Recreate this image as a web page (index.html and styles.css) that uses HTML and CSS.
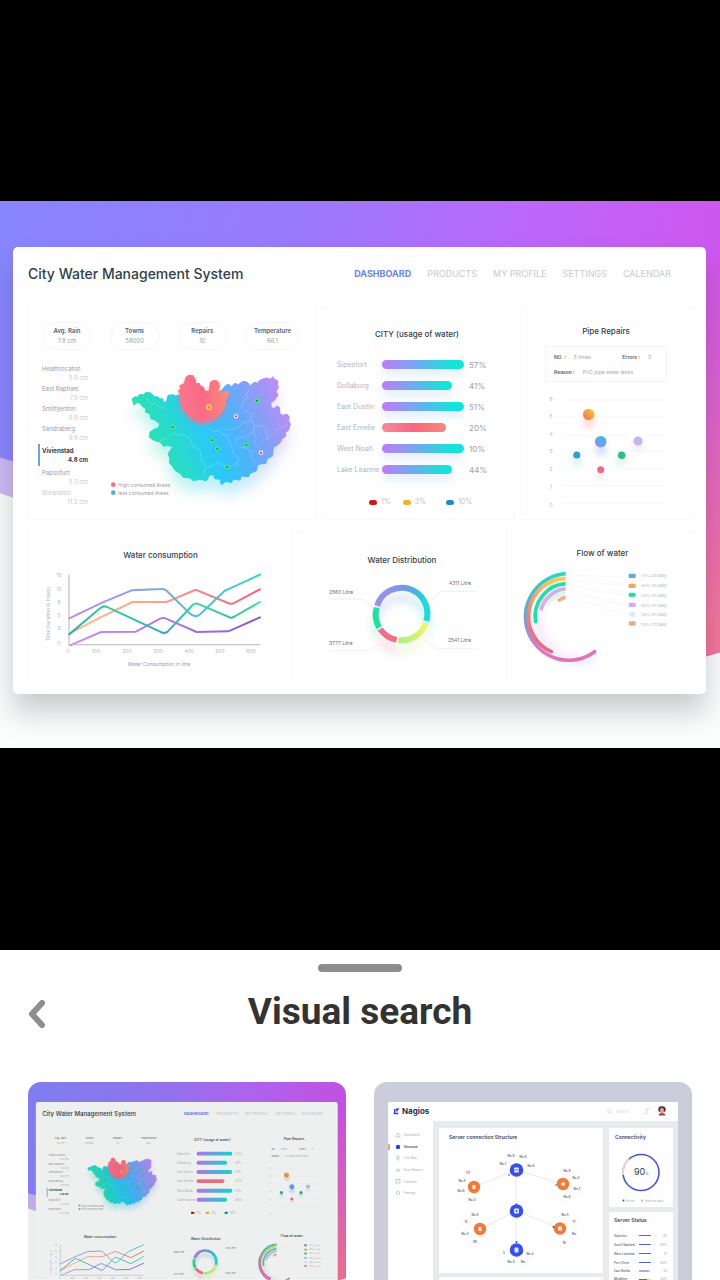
FILE: index.html
```html
<!DOCTYPE html>
<html lang="en">
<head>
<meta charset="utf-8">
<meta name="viewport" content="width=device-width, initial-scale=1">
<title>Visual search</title>
<link rel="stylesheet" href="styles.css">
</head>
<body>
<main class="viewer">
  <section class="shot">
    <svg class="shot-bg" viewBox="0 201 720 547" preserveAspectRatio="none" aria-hidden="true">
      <defs>
        <linearGradient id="sky" x1="0" y1="0" x2="1" y2="0.12"><stop offset="0" stop-color="#8886ff"/><stop offset=".4" stop-color="#987bfc"/><stop offset=".7" stop-color="#b969fb"/><stop offset="1" stop-color="#d056ee"/></linearGradient>
        <linearGradient id="dusk" x1="0" y1="0" x2="0" y2="1"><stop offset=".1" stop-color="#f274a6" stop-opacity="0"/><stop offset=".85" stop-color="#f5749c"/></linearGradient>
        <linearGradient id="duskMask" x1="0" y1="0" x2="1" y2="0"><stop offset=".3" stop-color="#000"/><stop offset=".9" stop-color="#fff"/></linearGradient>
        <mask id="rightSide"><rect x="-10" y="201" width="740" height="547" fill="url(#duskMask)"/></mask>
      </defs>
      <g id="backdrop">
        <rect x="-10" y="201" width="740" height="547" fill="#fcfdfd"/>
        <path d="M-10 440L200 520L200 560L-10 490Z" fill="#cdb8f6"/>
        <path d="M-10 201H730V650Q690 658 660 680Q600 702 560 688Q300 640 150 540Q60 470-10 455Z" fill="url(#sky)"/>
        <path d="M-10 201H730V650Q690 658 660 680Q600 702 560 688Q300 640 150 540Q60 470-10 455Z" fill="url(#dusk)" mask="url(#rightSide)"/>
      </g>
    </svg>

    <article class="board">
      <header class="board-head">
        <h1 class="board-title">City Water Management System</h1>
        <nav class="board-nav">
          <a class="nav-link nav-link-on" href="#dashboard">DASHBOARD</a>
          <a class="nav-link" href="#products">PRODUCTS</a>
          <a class="nav-link" href="#profile">MY PROFILE</a>
          <a class="nav-link" href="#settings">SETTINGS</a>
          <a class="nav-link" href="#calendar">CALENDAR</a>
        </nav>
      </header>

      <div class="row row-top">
        <section class="panel">
          <div class="stats">
            <div class="stat"><b class="stat-name">Avg. Rain</b><span class="stat-value">7.8 cm</span></div>
            <div class="stat"><b class="stat-name">Towns</b><span class="stat-value">58000</span></div>
            <div class="stat"><b class="stat-name">Repairs</b><span class="stat-value">10</span></div>
            <div class="stat"><b class="stat-name">Temperature</b><span class="stat-value">66.1</span></div>
          </div>
          <div class="region">
            <ul class="towns">
              <li class="town"><span>Heathrocaton</span><span class="town-rain">5.8 cm</span></li>
              <li class="town"><span>East Raphael</span><span class="town-rain">7.8 cm</span></li>
              <li class="town"><span>Smithjenton</span><span class="town-rain">6.8 cm</span></li>
              <li class="town"><span>Sandraberg</span><span class="town-rain">9.8 cm</span></li>
              <li class="town town-on"><span>Vivienstad</span><span class="town-rain">4.8 cm</span></li>
              <li class="town"><span>Papsofurt</span><span class="town-rain">5.3 cm</span></li>
              <li class="town town-faint"><span>Breanaton</span><span class="town-rain">11.2 cm</span></li>
            </ul>
            <svg class="map" viewBox="104 355 212 160" role="img" aria-label="Map of water use">
              <defs>
                <linearGradient id="land" gradientUnits="userSpaceOnUse" x1="400" y1="320" x2="800" y2="150"><stop offset="0" stop-color="#2ee0b0"/><stop offset=".2" stop-color="#27d9d0"/><stop offset=".4" stop-color="#2bc8fb"/><stop offset=".58" stop-color="#4bb4fb"/><stop offset=".8" stop-color="#8b9df6"/><stop offset="1" stop-color="#c18af6"/></linearGradient>
                <linearGradient id="hot" x1="0" y1="0" x2="1" y2="0"><stop offset="0" stop-color="#f9788c"/><stop offset=".5" stop-color="#fb6a86"/><stop offset="1" stop-color="#f98e78"/></linearGradient>
                <filter id="glow" x="-30%" y="-30%" width="160%" height="170%"><feGaussianBlur stdDeviation="20"/></filter>
                <filter id="soft" x="-20%" y="-20%" width="140%" height="150%"><feGaussianBlur stdDeviation="7"/></filter>
                <path id="outline" d="M336 147L345 140L352 142L358 134L370 134L376 128L390 128L398 134L402 140L415 141L420 147L428 146L430 157L440 155L444 136L460 134L466 138L480 134L540 150L605 122L612 112L620 104L628 104L634 110L645 100L655 104L664 97L672 94L684 98L690 108L698 100L708 96L712 102L718 92L730 86L742 84L752 88L758 80L762 86L774 94L772 106L776 112L768 124L774 134L770 142L764 150L752 160L754 172L762 176L770 168L778 172L780 192L790 196L800 192L808 200L806 212L811 222L806 240L796 248L798 258L786 266L782 276L772 286L760 292L758 318L742 326L738 340L722 342L712 346L710 362L690 370L686 380L664 378L660 390L640 388L634 398L618 394L604 404L600 388L584 386L580 374L568 376L560 392L540 388L520 392L510 384L490 382L480 370L466 362L458 350L448 338L450 326L444 312L452 300L458 290L440 286L432 290L420 276L404 272L388 262L390 246L402 238L414 234L420 222L404 210L392 206L390 192L376 186L378 176L368 170L360 160L350 158L342 166Z"/>
                <path id="hotland" d="M480 134L474 122L480 118L478 106L492 100L496 82L506 74L520 76L528 90L528 100L538 98L542 106L552 112L556 122L566 122L570 96L580 90L590 90L598 98L600 110L596 120L606 128L612 122L628 124L626 136L618 148L616 166L604 188L590 202L570 210L545 216L520 208L500 190L484 170L480 155Z"/>
              </defs>
              <g id="map-art">
                <g transform="translate(20 350) scale(.33333)">
                  <use href="#outline" fill="url(#land)" opacity=".3" filter="url(#glow)" transform="translate(0 36)"/>
                  <use href="#outline" fill="url(#land)" stroke="url(#land)" stroke-width="3" stroke-linejoin="round"/>
                  <g fill="none" stroke="#fff" stroke-opacity=".3" stroke-width="2" stroke-linejoin="round">
                    <path d="M380 144L392 160L408 162L424 176L436 168"/>
                    <path d="M420 272L446 262L462 250L488 256L508 264L520 290L540 300L544 330L556 346L552 380"/>
                    <path d="M570 234L582 246L596 240L604 252L620 256L626 272L634 290L640 310L656 324L650 350"/>
                    <path d="M690 120L678 132L680 146L668 156L664 172L684 188L696 196L690 214L668 218L656 232L630 240L616 238"/>
                    <path d="M696 214L704 228L722 226L740 238L742 268L760 252L778 236L804 224"/>
                    <path d="M704 228L700 246L708 258L706 280L718 294M700 246L676 262L650 264L648 280L660 292L680 294L696 306L694 322L708 340"/>
                    <path d="M560 352L580 346L590 338L612 346L634 350L650 340"/>
                  </g>
                  <use href="#hotland" fill="#f9708a" opacity=".65" filter="url(#soft)" transform="translate(0 10)"/>
                  <use href="#hotland" fill="url(#hot)"/>
                  <g fill="#1c7a3c" stroke="#3df57e" stroke-width="4">
                    <circle cx="458" cy="232" r="5"/><circle cx="577" cy="271" r="5"/><circle cx="592" cy="296" r="5"/><circle cx="622" cy="351" r="5"/><circle cx="679" cy="285" r="5"/><circle cx="711" cy="152" r="5"/>
                  </g>
                  <g fill="#c42b7c" stroke="#ffd2ef" stroke-width="4"><circle cx="648" cy="199" r="5"/><circle cx="723" cy="308" r="5"/></g>
                  <circle cx="567" cy="172" r="7" fill="#f08a3c" stroke="#ffd34f" stroke-width="4"/>
                  <circle cx="280" cy="404" r="7" fill="#f4717d"/><circle cx="280" cy="428" r="7" fill="#58acdf"/>
                </g>
                <text class="t5 ink" x="118" y="487">High consumed Areas</text>
                <text class="t5 ink" x="118" y="495">less consumed Areas</text>
              </g>
            </svg>
          </div>
        </section>

        <section class="panel city">
          <h2 class="panel-title">CITY (usage of water)</h2>
          <ul class="usage">
            <li class="usage-row"><span>Sipesfort</span><i class="bar"></i><span class="usage-pct">57%</span></li>
            <li class="usage-row"><span>Dollaburg</span><i class="bar bar-mid"></i><span class="usage-pct">41%</span></li>
            <li class="usage-row"><span>East Dustin</span><i class="bar"></i><span class="usage-pct">51%</span></li>
            <li class="usage-row"><span>East Emelie</span><i class="bar bar-hot"></i><span class="usage-pct">20%</span></li>
            <li class="usage-row"><span>West Noah</span><i class="bar"></i><span class="usage-pct">10%</span></li>
            <li class="usage-row"><span>Lake Leanne</span><i class="bar bar-mid"></i><span class="usage-pct">44%</span></li>
          </ul>
          <div class="keys">
            <span class="key"><i class="dot dot-red"></i>1%</span>
            <span class="key"><i class="dot dot-yellow"></i>3%</span>
            <span class="key key-far"><i class="dot dot-blue"></i>10%</span>
          </div>
        </section>

        <section class="panel pipes">
          <h2 class="panel-title">Pipe Repairs</h2>
          <div class="facts">
            <div class="fact"><b>NO&nbsp; :</b><span>5 times</span><b class="fact-right">Errors :</b><span>3</span></div>
            <div class="fact"><b>Reason :</b><span>PVC pipe water leaks</span></div>
          </div>
          <svg class="plot" viewBox="545 390 122 122" role="img" aria-label="Repairs plot">
            <defs>
              <linearGradient id="b1" x1="1" y1="0" x2="0" y2="1"><stop offset="0" stop-color="#f7cf3a"/><stop offset="1" stop-color="#f4694f"/></linearGradient>
              <linearGradient id="b2" x1="1" y1="0" x2="0" y2="1"><stop offset="0" stop-color="#25c3e0"/><stop offset="1" stop-color="#a18af3"/></linearGradient>
              <filter id="ballGlow" x="-100%" y="-100%" width="300%" height="300%"><feGaussianBlur stdDeviation="3"/></filter>
            </defs>
            <g id="plot-art">
              <path d="M563 400H664M563 417H664M563 435H664M563 451H664M563 469H664M563 486H664M563 503H664" stroke="#f7f8f8" fill="none"/>
              <g class="t5 pale" text-anchor="middle"><text x="551" y="401">6</text><text x="551" y="418">5</text><text x="551" y="436">4</text><text x="551" y="453">3</text><text x="551" y="471">2</text><text x="551" y="489">1</text><text x="551" y="507">0</text></g>
              <g filter="url(#ballGlow)" opacity=".3"><circle cx="589" cy="422" r="6" fill="#f98a5c"/><circle cx="601" cy="450" r="6" fill="#6da6f3"/><circle cx="638" cy="447" r="4" fill="#c3a5f0"/><circle cx="577" cy="461" r="4" fill="#45cbd2"/><circle cx="621" cy="461" r="4" fill="#45dfb0"/><circle cx="600" cy="475" r="3" fill="#ef6b90"/></g>
              <circle cx="588.7" cy="414.5" r="5.7" fill="url(#b1)"/><circle cx="600.7" cy="441.7" r="5.8" fill="url(#b2)"/><circle cx="638" cy="441" r="4.6" fill="#c6b6ef"/><circle cx="576.8" cy="455" r="3.6" fill="#309fc8"/><circle cx="621.7" cy="455.3" r="3.8" fill="#31bf88"/><circle cx="600.7" cy="469.7" r="3.5" fill="#e96c8e"/>
            </g>
          </svg>
        </section>
      </div>

      <div class="row row-bottom">
        <section class="panel lines">
          <h2 class="panel-title">Water consumption</h2>
          <svg class="chart" viewBox="29 561 263 112" role="img" aria-label="Water consumption by time">
            <defs>
              <linearGradient id="l1" gradientUnits="userSpaceOnUse" x1="148" y1="0" x2="720" y2="0"><stop offset="0" stop-color="#c08af0"/><stop offset=".35" stop-color="#8e9fdc"/><stop offset=".7" stop-color="#55bfd6"/><stop offset="1" stop-color="#2fd3c4"/></linearGradient>
              <linearGradient id="l2" gradientUnits="userSpaceOnUse" x1="148" y1="0" x2="720" y2="0"><stop offset="0" stop-color="#f5c283"/><stop offset=".5" stop-color="#f4a18d"/><stop offset="1" stop-color="#e8627f"/></linearGradient>
              <linearGradient id="l3" gradientUnits="userSpaceOnUse" x1="148" y1="0" x2="720" y2="0"><stop offset="0" stop-color="#2fa8ac"/><stop offset=".2" stop-color="#35cf9c"/><stop offset=".5" stop-color="#37a9bd"/><stop offset=".68" stop-color="#3bd6a4"/><stop offset=".85" stop-color="#37bd93"/><stop offset="1" stop-color="#45e39d"/></linearGradient>
              <linearGradient id="l4" gradientUnits="userSpaceOnUse" x1="148" y1="0" x2="720" y2="0"><stop offset="0" stop-color="#cf93e4"/><stop offset=".5" stop-color="#b177e0"/><stop offset="1" stop-color="#8b5ad0"/></linearGradient>
            </defs>
            <g id="lines-art">
              <g transform="translate(20 525) scale(.33333)" fill="none" stroke-width="6" stroke-linejoin="round" stroke-linecap="round">
                <path d="M147 150V359H720" stroke="#c6c6ca" stroke-width="4"/>
                <path d="M150 361L243 321L348 320L415 284Q430 274 445 284L530 321L625 319L720 277" stroke="url(#l4)"/>
                <path d="M148 326L240 278L338 231H440L518 198Q527 192 536 198L624 234Q635 240 646 232L720 193" stroke="url(#l2)"/>
                <path d="M148 328L240 250Q250 240 264 247L420 320Q432 328 443 320L518 240Q527 232 538 238L624 275Q635 282 646 273L720 231" stroke="url(#l3)"/>
                <path d="M148 280L248 232L335 196L424 192Q432 191 440 197L508 264Q525 282 542 266L608 203Q614 196 624 193L720 149" stroke="url(#l1)"/>
              </g>
              <g class="t5 pale" text-anchor="middle">
                <text x="59" y="577">15</text><text x="59" y="591">10</text><text x="59" y="604">8</text><text x="59" y="617">5</text><text x="59" y="630">3</text><text x="59" y="645">0</text>
                <text x="68" y="653">0</text><text x="96" y="653">100</text><text x="127" y="653">200</text><text x="158" y="653">300</text><text x="189" y="653">400</text><text x="220" y="653">500</text><text x="251" y="653">600</text>
              </g>
              <text class="t5 ink" x="159" y="666" text-anchor="middle">Water Consumption in litre</text>
              <text class="t5 pale" text-anchor="middle" transform="translate(50 614) rotate(-90)">Time Duration in Hours</text>
            </g>
          </svg>
        </section>

        <section class="panel dist">
          <h2 class="panel-title">Water Distribution</h2>
          <svg class="chart" viewBox="298 566 208 108" role="img" aria-label="Water distribution">
            <defs>
              <linearGradient id="d1" x1="0" y1="0" x2="1" y2=".3"><stop offset="0" stop-color="#ae8bee"/><stop offset=".5" stop-color="#6f9be3"/><stop offset=".85" stop-color="#33c5d9"/><stop offset="1" stop-color="#22d8da"/></linearGradient>
              <linearGradient id="d2" x1="1" y1="0" x2="0" y2="1"><stop offset="0" stop-color="#f3f56e"/><stop offset="1" stop-color="#adf384"/></linearGradient>
              <filter id="ringGlow" x="-40%" y="-40%" width="180%" height="180%"><feGaussianBlur stdDeviation="12"/></filter>
              <g id="ring" fill="none" stroke-width="18">
                <path d="M246.500 242.500A77 77 0 0 1 393.700 288" stroke="url(#d1)"/>
                <path d="M392.500 293.500A77 77 0 0 1 310 345.500" stroke="url(#d2)"/>
                <path d="M305 344.500A77 77 0 0 1 255.500 312.500" stroke="#f0708a"/>
                <path d="M252.500 307.500A77 77 0 0 1 245 247.500" stroke="#21dfa0"/>
              </g>
            </defs>
            <g id="dist-art">
              <g transform="translate(295 525) scale(.33333)">
                <use href="#ring" filter="url(#ringGlow)" opacity=".3" transform="translate(0 30)"/>
                <use href="#ring"/>
                <path d="M105 222H200L238 248M404 232L436 199H545M105 376H225L260 352M380 342L425 370H545" fill="none" stroke="#f0f0f3" stroke-width="3"/>
              </g>
              <g class="t5 dark"><text x="329" y="594">2560 Litre</text><text x="449" y="585">4311 Litre</text><text x="329" y="645">3777 Litre</text><text x="448" y="642">2541 Litre</text></g>
            </g>
          </svg>
        </section>

        <section class="panel flow">
          <h2 class="panel-title">Flow of water</h2>
          <svg class="chart" viewBox="512 559 181 118" role="img" aria-label="Flow of water">
            <defs>
              <linearGradient id="f1" gradientUnits="userSpaceOnUse" x1="190" y1="146" x2="210" y2="405"><stop offset="0" stop-color="#2bd6c4"/><stop offset=".25" stop-color="#4fb9c4"/><stop offset=".6" stop-color="#9d8fc8"/><stop offset=".85" stop-color="#d47cc4"/><stop offset="1" stop-color="#e274b8"/></linearGradient>
              <linearGradient id="f2" gradientUnits="userSpaceOnUse" x1="197" y1="160" x2="150" y2="380"><stop offset="0" stop-color="#f6cf55"/><stop offset=".5" stop-color="#ef8a78"/><stop offset="1" stop-color="#e3678c"/></linearGradient>
              <linearGradient id="f4" gradientUnits="userSpaceOnUse" x1="197" y1="190" x2="120" y2="255"><stop offset="0" stop-color="#c5b5ee"/><stop offset="1" stop-color="#e2a9ea"/></linearGradient>
            </defs>
            <g id="flow-art">
              <g transform="translate(500 525) scale(.33333)">
                <path d="M197 154A130 130 0 1 0 285 400" fill="none" stroke="#c58be8" stroke-width="14" opacity=".3" filter="url(#ringGlow)"/>
                <path d="M197 150L370 156M197 162L370 182M197 180L370 210M197 194L370 240M197 210L370 268" stroke="#f7f8f9" stroke-width="2"/>
                <path d="M197 205A71 71 0 0 0 140 240" fill="none" stroke="#dff3f0" stroke-width="12"/>
                <g fill="none" stroke-width="11">
                  <path d="M197 146A130 130 0 1 0 284 380" stroke="url(#f1)"/>
                  <path d="M197 160A115 115 0 0 0 154 380" stroke="url(#f2)"/>
                  <path d="M197 176A98 98 0 0 0 107 290" stroke="#21dfa6"/>
                  <path d="M197 191A84 84 0 0 0 123 256" stroke="url(#f4)"/>
                  <path d="M197 217Q185 218 174 228" stroke="#efb283"/>
                </g>
                <circle cx="284" cy="380" r="5.500" fill="#e274b8"/><circle cx="154" cy="380" r="5.500" fill="#e3678c"/><circle cx="107" cy="290" r="5.500" fill="#21dfa6"/>
                <rect x="386" y="146" width="21" height="13" rx="3" fill="#66a7dd"/><rect x="386" y="176" width="21" height="13" rx="3" fill="#f2a560"/><rect x="386" y="203" width="21" height="13" rx="5" fill="#22dda9"/><rect x="386" y="233" width="21" height="13" rx="3" fill="#ccb0eb"/><rect x="388" y="260" width="18" height="15" rx="3" fill="#d7eff2"/><rect x="386" y="289" width="21" height="13" rx="4" fill="#eda987"/>
              </g>
              <g class="t4 pale"><text x="641" y="577">75% cm daily</text><text x="641" y="587">65% cm daily</text><text x="641" y="597">50% cm daily</text><text x="641" y="607">45% cm daily</text><text x="641" y="616">30% cm daily</text><text x="641" y="626">25% cm daily</text></g>
            </g>
          </svg>
        </section>
      </div>
    </article>
  </section>
</main>

<section class="sheet">
  <div class="handle"></div>
  <header class="sheet-head">
    <button class="back" type="button" aria-label="Back"><svg class="back-icon" viewBox="0 0 20 32" aria-hidden="true"><path d="M14 7L4 18L14 29" fill="none" stroke="#8e8e8e" stroke-width="6" stroke-linecap="round" stroke-linejoin="round"/></svg></button>
    <h2 class="sheet-title">Visual search</h2>
  </header>
  <div class="results">
    <a class="result" href="#water">
      <svg class="thumb" viewBox="-5 201 730 454" role="img" aria-label="City Water Management System">
        <defs><linearGradient id="u" x1="0" y1="0" x2="1" y2="0"><stop offset="0" stop-color="#c17af8"/><stop offset="1" stop-color="#16e2d8"/></linearGradient></defs>
        <use href="#backdrop"/>
        <rect x="13" y="247" width="693" height="447" rx="5" fill="#fdfefe"/>
        <text class="tt" x="28" y="279">City Water Management System</text>
        <g class="tn"><text class="tn-on" x="353" y="277">DASHBOARD</text><text x="428" y="277">PRODUCTS</text><text x="493" y="277">MY PROFILE</text><text x="563" y="277">SETTINGS</text><text x="624" y="277">CALENDAR</text></g>
        <g class="th" text-anchor="middle"><text x="418" y="337">CITY (usage of water)</text><text x="606" y="334">Pipe Repairs</text><text x="160" y="558">Water consumption</text><text x="403" y="563">Water Distribution</text><text x="601" y="557">Flow of water</text></g>
        <g class="t6 dark" text-anchor="middle"><text x="69" y="333">Avg. Rain</text><text x="136" y="333">Towns</text><text x="201" y="333">Repairs</text><text x="272" y="333">Temperature</text></g>
        <g class="t6 pale" text-anchor="middle"><text x="69" y="344">7.8 cm</text><text x="136" y="344">58000</text><text x="201" y="344">10</text><text x="272" y="344">66.1</text></g>
        <g class="t6 ink"><text x="42" y="371">Heathrocaton</text><text x="42" y="391">East Raphael</text><text x="42" y="411">Smithjenton</text><text x="42" y="430">Sandraberg</text><text x="42" y="475">Papsofurt</text><text x="42" y="496">Breanaton</text></g>
        <g class="t6 pale" text-anchor="end"><text x="88" y="380">5.8 cm</text><text x="88" y="400">7.8 cm</text><text x="88" y="420">6.8 cm</text><text x="88" y="439">9.8 cm</text><text x="88" y="484">5.3 cm</text><text x="88" y="505">11.2 cm</text></g>
        <text class="t6 strong" x="42" y="452">Vivienstad</text><text class="t6 strong" x="88" y="461" text-anchor="end">4.8 cm</text>
        <rect x="38" y="444" width="2" height="21" fill="#69b4d8"/>
        <use href="#map-art"/>
        <g fill="url(#u)"><rect x="382" y="361" width="82" height="9" rx="4"/><rect x="382" y="382" width="70" height="9" rx="4"/><rect x="382" y="403" width="82" height="9" rx="4"/><rect x="382" y="446" width="82" height="9" rx="4"/><rect x="382" y="467" width="70" height="9" rx="4"/></g>
        <rect x="382" y="424" width="64" height="9" rx="4" fill="#f7768a"/>
        <g class="t7 pale"><text x="337" y="368">Sipesfort</text><text x="337" y="389">Dollaburg</text><text x="337" y="410">East Dustin</text><text x="337" y="431">East Emelie</text><text x="337" y="453">West Noah</text><text x="337" y="474">Lake Leanne</text><text x="470" y="368">57%</text><text x="470" y="389">41%</text><text x="470" y="410">51%</text><text x="470" y="431">20%</text><text x="470" y="453">10%</text><text x="470" y="474">44%</text><text x="382" y="505">1%</text><text x="415" y="505">3%</text><text x="458" y="505">10%</text></g>
        <rect x="369" y="499" width="8" height="5" rx="2" fill="#d5141c"/><rect x="403" y="499" width="8" height="5" rx="2" fill="#e9b823"/><rect x="446" y="499" width="8" height="5" rx="2" fill="#1f8bc9"/>
        <g class="t5 dark"><text x="554" y="358">NO :</text><text x="618" y="358">Errors :</text><text x="554" y="373">Reason :</text></g>
        <g class="t5 pale"><text x="573" y="358">5 times</text><text x="646" y="358">3</text><text x="587" y="373">PVC pipe water leaks</text></g>
        <use href="#plot-art"/><use href="#lines-art"/><use href="#dist-art"/><use href="#flow-art"/>
        <rect x="-5" y="201" width="730" height="454" fill="#000" opacity=".06"/>
      </svg>
    </a>
    <a class="result" href="#nagios">
      <svg class="thumb" viewBox="374 1082 318 198" role="img" aria-label="Nagios">
        <rect x="374" y="1082" width="318" height="198" fill="#cbcddb"/>
        <rect x="388" y="1102" width="290" height="180" rx="1" fill="#e7ebee"/>
        <path d="M388 1102H678V1121H433V1280H388Z" fill="#fefefe"/>
        <path d="M395 1109L394.500 1113.500H398.500M397 1111.500V1109H399" fill="none" stroke="#3446c4" stroke-width="1.600"/>
        <text class="n-brand" x="402" y="1114">Nagios</text>
        <circle cx="609" cy="1111" r="1.800" fill="none" stroke="#d8dade" stroke-width=".7"/><path d="M610.300 1112.300L612 1114" stroke="#d8dade" stroke-width=".7"/><text class="n-search" x="616" y="1113">Search</text>
        <path d="M644 1113.500H648.500L647.500 1112V1110L646 1109L644.800 1110V1112Z" fill="none" stroke="#d8dade" stroke-width=".7"/><circle cx="648" cy="1109" r=".7" fill="#f39a8a"/>
        <g><circle cx="662" cy="1111" r="4.500" fill="#eee6e4"/><path d="M658.300 1110Q658 1106 662 1106.200Q666 1106.200 665.700 1110L664.500 1112H659.500Z" fill="#4d302e"/><ellipse cx="662" cy="1110.500" rx="2" ry="2.700" fill="#dfa68e"/><path d="M658.500 1115.500Q659 1113 662 1113Q665 1113 665.500 1115.500Z" fill="#a34350"/></g>
        <rect x="388" y="1144" width="2" height="6" fill="#f2a26c"/>
        <g fill="none" stroke="#b8bdc8" stroke-width=".8"><path d="M396 1135.500L398 1133L400 1135.500V1137H396ZM398 1160.500L396.800 1158A1.300 1.300 0 1 1 399.200 1158ZM396 1171L398 1168.500L400 1171H396ZM396 1179.500H400V1183H396Z"/><circle cx="398" cy="1193" r="1.600"/></g>
        <circle cx="398" cy="1147" r="2.200" fill="#3146cf"/>
        <g class="n-pale"><text x="404" y="1136">Dashboard</text><text x="404" y="1159">City Map</text><text x="404" y="1171">Error Reports</text><text x="404" y="1183">Calendar</text><text x="404" y="1194">Settings</text></g><text class="n-on" x="404" y="1148">Structure</text>
        <rect x="439" y="1128" width="164" height="145" fill="#fefefe"/><rect x="439" y="1277" width="164" height="4" fill="#fefefe"/><rect x="609" y="1128" width="64" height="79" fill="#fefefe"/><rect x="609" y="1212" width="64" height="70" fill="#fefefe"/>
        <text class="n-head" x="449" y="1139">Server connection Structure</text><text class="n-head" x="615" y="1139">Connectivity</text><text class="n-head" x="614" y="1222">Server Status</text>
        <path d="M516 1170L474 1187M516 1170L563 1184M516 1211L480 1229M516 1211L560 1228M516 1170V1250" stroke="#e7e8f1" stroke-width="1" fill="none"/>
        <g fill="#fff" stroke="#eef0f4" stroke-width=".5"><circle cx="511" cy="1157" r="4"/><circle cx="523" cy="1158" r="4"/><circle cx="503" cy="1166" r="4"/><circle cx="531" cy="1167" r="4"/><circle cx="468" cy="1174" r="4"/><circle cx="462" cy="1182" r="4"/><circle cx="461" cy="1192" r="4"/><circle cx="472" cy="1201" r="4"/><circle cx="567" cy="1172" r="4"/><circle cx="576" cy="1179" r="4"/><circle cx="577" cy="1190" r="4"/><circle cx="567" cy="1198" r="4"/><circle cx="475" cy="1216" r="4"/><circle cx="466" cy="1223" r="4"/><circle cx="465" cy="1235" r="4"/><circle cx="475" cy="1243" r="4"/><circle cx="565" cy="1216" r="4"/><circle cx="574" cy="1223" r="4"/><circle cx="574" cy="1235" r="4"/><circle cx="564" cy="1244" r="4"/><circle cx="504" cy="1254" r="4"/><circle cx="511" cy="1263" r="4"/><circle cx="523" cy="1263" r="4"/><circle cx="530" cy="1255" r="4"/></g>
        <g class="n-node" text-anchor="middle"><text x="511" y="1157">No.9</text><text x="523" y="1158">No.8</text><text x="503" y="1165">No.7</text><text x="531" y="1167">No.6</text><text x="468" y="1174">1.8</text><text x="462" y="1182">No.8</text><text x="461" y="1192">No.6</text><text x="472" y="1201">No.5</text><text x="567" y="1172">No.9</text><text x="576" y="1179">No.4</text><text x="577" y="1190">No.7</text><text x="567" y="1198">No.6</text><text x="475" y="1216">No.8</text><text x="466" y="1223">12</text><text x="465" y="1235">No.4</text><text x="475" y="1243">8B</text><text x="565" y="1216">No.4</text><text x="574" y="1223">11</text><text x="574" y="1235">No</text><text x="564" y="1244">10</text><text x="504" y="1254">5</text><text x="511" y="1263">No.4</text><text x="523" y="1263">No</text><text x="530" y="1255">No.5</text></g>
        <g fill="#3851e4"><circle cx="516.500" cy="1170" r="6.800"/><circle cx="516.500" cy="1211" r="6.800"/><circle cx="516.500" cy="1250" r="6.800"/></g>
        <g fill="#f27a38"><circle cx="474" cy="1187" r="6.200"/><circle cx="563" cy="1184" r="6.200"/><circle cx="480" cy="1229" r="6.200"/><circle cx="560" cy="1228.500" r="6.200"/></g>
        <g fill="#fff" opacity=".85"><rect x="514" y="1167.500" width="5" height="5" rx="1"/><rect x="514" y="1208.500" width="5" height="5" rx="1"/><rect x="514.500" y="1247.500" width="4" height="5" rx="1"/><rect x="472.500" y="1185" width="3" height="4"/><rect x="561" y="1182.500" width="4" height="3"/><rect x="478.500" y="1227" width="3" height="4"/><rect x="558" y="1226.500" width="4" height="4"/></g>
        <circle cx="516.500" cy="1211" r="1" fill="#3851e4"/><path d="M514 1170H519" stroke="#3851e4" stroke-width=".7"/>
        <g fill="#3146cf"><circle cx="509" cy="1175" r=".8"/><circle cx="516.500" cy="1204" r=".8"/><circle cx="516.500" cy="1242" r="1"/><circle cx="556" cy="1185" r=".8"/><circle cx="553.500" cy="1227" r="1"/></g>
        <circle cx="641" cy="1172.500" r="18" fill="none" stroke="#4758c9" stroke-width="1.600"/><path d="M623.200 1175A18 18 0 0 1 629 1159" fill="none" stroke="#f6d6c3" stroke-width="2"/>
        <text class="n-big" x="634" y="1175">90</text><text class="n-small" x="645" y="1175">%</text>
        <circle cx="623.500" cy="1200.500" r="1" fill="#3446c4"/><circle cx="642" cy="1200.500" r="1" fill="#f0a060"/><g class="n-pale"><text x="626" y="1202">Active</text><text x="645" y="1202">Inactive days</text></g>
        <g class="n-row"><text x="614" y="1237">Sipesfort</text><text x="614" y="1246">South Raphael</text><text x="614" y="1255">West Leandria</text><text x="614" y="1264">Port Vince</text><text x="614" y="1272">East Noella</text><text x="614" y="1280">Miraldine</text></g>
        <path d="M639 1235.500H651M639 1244.500H651M639 1253.500H651M639 1262.500H651M639 1271H649M639 1279.500H647" stroke="#5364c6"/><path d="M649 1271H651M647 1279.500H651" stroke="#efd8b8"/>
        <g class="n-pale" text-anchor="end"><text x="667" y="1237">60</text><text x="667" y="1246">80%</text><text x="667" y="1255">70</text><text x="667" y="1264">60%</text><text x="667" y="1272">55</text><text x="667" y="1280">40%</text></g>
      </svg>
    </a>
  </div>
</section>
</body>
</html>
```
FILE: styles.css
```css
* { box-sizing: border-box; }

body {
  margin: 0;
  min-height: 100vh;
  background: #000;
  color: #333f4a;
  font-family: Inter, "Open Sans", sans-serif;
}

h1, h2, ul { margin: 0; padding: 0; }
ul { list-style: none; }
svg { display: block; }

.viewer { padding: 201px 0 202px; }

.shot {
  position: relative;
  overflow: hidden;
  padding: 46px 14px 54px 13px;
}
.shot-bg {
  position: absolute;
  inset: 0;
  width: 100%;
  height: 100%;
}

.board {
  position: relative;
  padding: 0 12px 12px 15px;
  background: #fefefe;
  border-radius: 5px;
  box-shadow: 0 18px 28px rgba(40, 60, 60, .25);
}
.board-head {
  display: flex;
  align-items: center;
  justify-content: space-between;
  height: 60px;
  padding: 0 23px 6px 0;
}
.board-title {
  font-size: 14px;
  line-height: 20px;
  font-weight: 500;
}
.board-nav { display: flex; gap: 16px; }
.nav-link {
  color: #c9cbd0;
  font-size: 9px;
  line-height: 12px;
  text-decoration: none;
}
.nav-link-on { color: #6f83e0; font-weight: 700; }

.row { display: grid; }
.row-top { grid-template-columns: 289fr 193fr 174fr; gap: 5px; }
.row-bottom { grid-template-columns: 265fr 210fr 183fr; gap: 4px; margin-top: 11px; }

.panel {
  min-width: 0;
  border: 1px solid #fafbfb;
}
.row-top .panel { min-height: 213px; }
.row-bottom .panel { min-height: 151px; }
.panel-title {
  font-size: 8px;
  line-height: 12px;
  font-weight: 500;
  text-align: center;
}

.stats {
  display: flex;
  justify-content: space-between;
  padding: 14px 16px 0 13px;
}
.stat {
  display: flex;
  flex-direction: column;
  align-items: center;
  justify-content: center;
  min-width: 50px;
  height: 28px;
  padding: 0 8px;
  border: 1px solid #f4f5f6;
  border-radius: 14px;
  font-size: 6px;
  line-height: 10px;
}
.stat-name { font-weight: 600; color: #59606a; }
.stat-value { color: #9b9fa6; }

.region {
  display: flex;
  justify-content: space-between;
  padding: 5px 0 0 9px;
}
.towns {
  display: flex;
  flex-direction: column;
  gap: 2px;
  width: 50px;
  padding-top: 9px;
  font-size: 6px;
  line-height: 9px;
  color: #9a9da6;
}
.town {
  display: flex;
  flex-direction: column;
  padding-left: 2px;
  border-left: 2px solid transparent;
}
.town-rain { text-align: right; color: #c9cbd0; }
.town-on {
  padding: 2px 0 2px 2px;
  border-color: #69a6dc;
  color: #333f4a;
  font-weight: 700;
}
.town-on .town-rain { color: #333f4a; }
.town-faint { color: #c9cbd0; }
.map { flex: 0 1 212px; min-width: 0; overflow: visible; }

.city { padding: 20px 25px 0 14px; }
.city .panel-title { padding-left: 8px; }
.usage { padding-top: 14px; }
.usage-row {
  display: grid;
  grid-template-columns: 45px 1fr 25px;
  align-items: center;
  height: 21px;
  color: #b4b7bd;
  font-size: 7px;
}
.usage-pct { padding-left: 5px; color: #9da1a8; font-size: 8px; }
.bar {
  height: 9px;
  border-radius: 5px;
  background: linear-gradient(90deg, #c17af8, #6cadf0 45%, #16e2d8 85%);
  box-shadow: 0 6px 8px rgba(120, 170, 240, .2);
}
.bar-mid { width: 85%; }
.bar-hot {
  width: 78%;
  background: linear-gradient(90deg, #f78a98, #f8677f 50%, #f6897e);
  box-shadow: none;
}
.keys {
  display: flex;
  gap: 12px;
  padding: 17px 0 0 32px;
  color: #c2c4c9;
  font-size: 7px;
  line-height: 10px;
}
.key { display: flex; align-items: center; gap: 4px; }
.key-far { padding-left: 8px; }
.dot { width: 8px; height: 5px; border-radius: 3px; }
.dot-red { background: #d5141c; }
.dot-yellow { background: #e9b823; }
.dot-blue { background: #1f8bc9; }

.pipes { padding: 17px 26px 0 24px; }
.facts {
  display: flex;
  flex-direction: column;
  justify-content: center;
  gap: 5px;
  height: 36px;
  margin: 9px 0 8px;
  padding: 0 15px 0 8px;
  border: 1px solid #f3f4f6;
  font-size: 5px;
  line-height: 10px;
  color: #a6a9b0;
}
.fact { display: flex; gap: 8px; }
.fact b { color: #59606a; font-weight: 600; }
.fact .fact-right { margin-left: auto; }
.plot, .chart { width: 100%; height: auto; overflow: visible; }

.lines { padding-top: 17px; }
.dist { padding-top: 22px; }
.flow { padding-top: 15px; }

.t4 { font-size: 4px; }
.t5 { font-size: 5px; }
.t6 { font-size: 6px; }
.t7 { font-size: 7px; }
.pale { fill: #b4b7bd; }
.ink { fill: #9a9da6; }
.dark { fill: #6b7078; }
.strong { fill: #333f4a; font-weight: 700; }

.sheet {
  padding: 14px 28px 0;
  background: #fff;
}
.handle {
  width: 84px;
  height: 8px;
  margin: 0 auto;
  border-radius: 4px;
  background: #8e8e8e;
}
.sheet-head {
  display: grid;
  grid-template-columns: 20px 1fr 20px;
  align-items: center;
  padding: 18px 0 48px;
}
.sheet-title {
  color: #333;
  font-family: Roboto, sans-serif;
  font-size: 37px;
  line-height: 44px;
  font-weight: 700;
  text-align: center;
}
.back {
  padding: 0;
  border: 0;
  background: none;
}
.back-icon { width: 20px; height: 32px; }

.results {
  display: grid;
  grid-template-columns: 1fr 1fr;
  gap: 28px;
}
.result {
  overflow: hidden;
  border-radius: 13px 13px 0 0;
}
.thumb { width: 100%; height: auto; }

.tt { font-size: 14px; font-weight: 500; fill: #333f4a; }
.tn { font-size: 9px; fill: #c9cbd0; }
.tn-on { fill: #6f83e0; font-weight: 700; }
.th { font-size: 8px; font-weight: 500; fill: #333f4a; }

.n-brand { font-size: 8px; font-weight: 700; fill: #28324e; }
.n-head { font-size: 5px; font-weight: 600; fill: #3b4660; }
.n-pale { font-size: 3px; fill: #a7adba; }
.n-search { font-size: 4px; fill: #d8dade; }
.n-on { font-size: 3px; font-weight: 700; fill: #3c4ba0; }
.n-node { font-size: 3px; font-weight: 600; fill: #59606a; }
.n-row { font-size: 3px; font-weight: 500; fill: #59606a; }
.n-big { font-size: 9px; fill: #333f4a; }
.n-small { font-size: 4px; fill: #6b7078; }
```
